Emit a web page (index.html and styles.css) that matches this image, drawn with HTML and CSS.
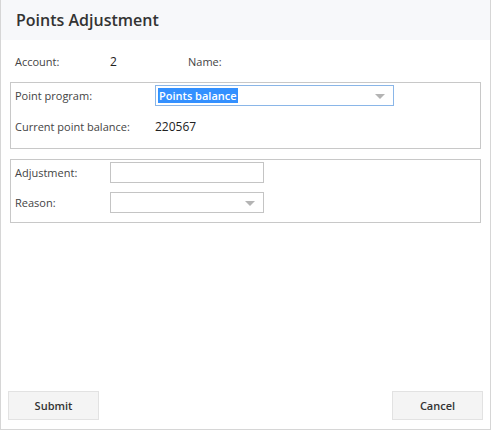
FILE: index.html
```html
<!DOCTYPE html>
<html>
<head>
<meta charset="utf-8">
<link rel="stylesheet" href="styles.css">
</head>
<body>
<div class="dialog">
  <div class="header">Points Adjustment</div>
  <div class="content">
    <div class="account-row">
      <span class="lbl-account">Account:</span>
      <span class="val-account">2</span>
      <span class="lbl-name">Name:</span>
    </div>
    <div class="box box-program">
      <div class="row">
        <span class="label">Point program:</span>
        <div class="select select-wide focused">
          <span class="selected-text">Points balance</span>
          <span class="arrow"></span>
        </div>
      </div>
      <div class="row row-balance">
        <span class="label">Current point balance:</span>
        <span class="value">220567</span>
      </div>
    </div>
    <div class="box box-adjust">
      <div class="row">
        <span class="label label-short">Adjustment:</span>
        <div class="input"></div>
      </div>
      <div class="row">
        <span class="label label-short">Reason:</span>
        <div class="select select-narrow"><span class="arrow"></span></div>
      </div>
    </div>
  </div>
  <div class="footer">
    <button class="btn">Submit</button>
    <button class="btn">Cancel</button>
  </div>
</div>
</body>
</html>
```
FILE: styles.css
```css
html, body {
  margin: 0;
  padding: 0;
  background: #fff;
}
body {
  font-family: "Open Sans", "Noto Sans", sans-serif;
  font-size: 11px;
  color: #444;
}
.dialog {
  box-sizing: border-box;
  width: 491px;
  height: 430px;
  border: 1px solid #d6d6d6;
  border-top: none;
  display: flex;
  flex-direction: column;
}
.header {
  height: 40px;
  background: #f7f8fa;
  font-size: 16px;
  font-weight: 600;
  color: #333;
  padding-left: 15px;
  line-height: 40px;
}
.content {
  flex: 1;
  padding: 0 9px;
}
.account-row {
  display: flex;
  height: 41px;
  align-items: center;
  padding-left: 5px;
  padding-top: 1px;
}
.lbl-account { width: 95px; }
.val-account { width: 78px; color: #222; font-size: 12px; }
.box {
  border: 1px solid #c8c8c8;
  padding: 2px 4px;
}
.box-program {
  height: 61px;
}
.box-adjust {
  margin-top: 10px;
  height: 58px;
}
.row {
  display: flex;
  align-items: center;
  height: 21px;
}
.box-adjust .row + .row { margin-top: 9px; }
.row-balance {
  margin-top: 10px;
}
.label {
  width: 140px;
}
.label-short {
  width: 95px;
}
.value {
  color: #222;
  font-size: 12px;
}
.select, .input {
  box-sizing: border-box;
  height: 21px;
  border: 1px solid #c4c4c4;
  position: relative;
  background: #fff;
}
.select-wide {
  width: 239px;
  border-color: #8ab6e8;
  display: flex;
  align-items: center;
  padding-left: 2px;
}
.select-narrow, .input {
  width: 154px;
}
.selected-text {
  background: #3390ff;
  color: #fff;
  font-weight: 600;
  line-height: 15px;
  padding: 0 1px;
}
.arrow {
  position: absolute;
  right: 8px;
  top: 8px;
  width: 0;
  height: 0;
  border-left: 5px solid transparent;
  border-right: 5px solid transparent;
  border-top: 5px solid #b4b4b4;
}
.footer {
  display: flex;
  justify-content: space-between;
  padding: 0 7px 9px 7px;
}
.btn {
  width: 91px;
  height: 29px;
  background: #f4f4f4;
  border: 1px solid #e2e2e2;
  font-family: "Open Sans", "Noto Sans", sans-serif;
  font-size: 11px;
  font-weight: 600;
  color: #333;
  padding: 0;
}
```
